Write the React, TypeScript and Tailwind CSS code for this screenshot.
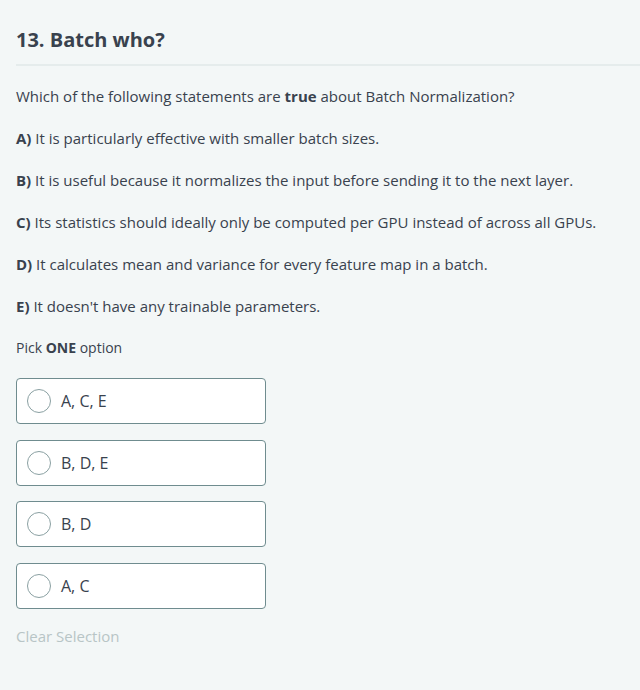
const statements = [
  { key: "A)", text: "It is particularly effective with smaller batch sizes." },
  { key: "B)", text: "It is useful because it normalizes the input before sending it to the next layer." },
  { key: "C)", text: "Its statistics should ideally only be computed per GPU instead of across all GPUs." },
  { key: "D)", text: "It calculates mean and variance for every feature map in a batch." },
  { key: "E)", text: "It doesn't have any trainable parameters." },
];

const options = ["A, C, E", "B, D, E", "B, D", "A, C"];

export default function App() {
  return (
    <div
      className="min-h-[690px] w-[640px] bg-[#f3f7f7] text-[#39424e]"
      style={{ fontFamily: '"Open Sans", "Noto Sans", sans-serif' }}
    >
      <div className="pl-4 pt-[26px]">
        <h1 className="text-[20px] font-bold leading-7">13. Batch who?</h1>
        <div className="mt-[10px] h-[2px] bg-[#e5ecec]" />
      </div>

      <div className="px-4 pt-[19px]">
        <p className="text-[15px] leading-[22px]">
          Which of the following statements are <b className="font-bold">true</b> about Batch
          Normalization?
        </p>
        {statements.map((s) => (
          <p key={s.key} className="mt-5 text-[15px] leading-[22px]">
            <b className="font-bold">{s.key}</b> {s.text}
          </p>
        ))}

        <p className="mt-[21px] text-[14px] leading-5">
          Pick <b className="font-bold">ONE</b> option
        </p>

        <div className="mt-5 flex flex-col gap-[15.6px]">
          {options.map((o) => (
            <label
              key={o}
              className="flex h-[46px] w-[250px] items-center gap-[10px] rounded-[4px] border border-[#6f8c8f] bg-white pl-[10px] text-[16px]"
            >
              <span className="h-6 w-6 rounded-full border border-[#8aa0a2] bg-white" />
              <span>{o}</span>
            </label>
          ))}
        </div>

        <button className="mt-4 text-[15px] leading-[22px] text-[#b8c5c6]">
          Clear Selection
        </button>
      </div>
    </div>
  );
}
